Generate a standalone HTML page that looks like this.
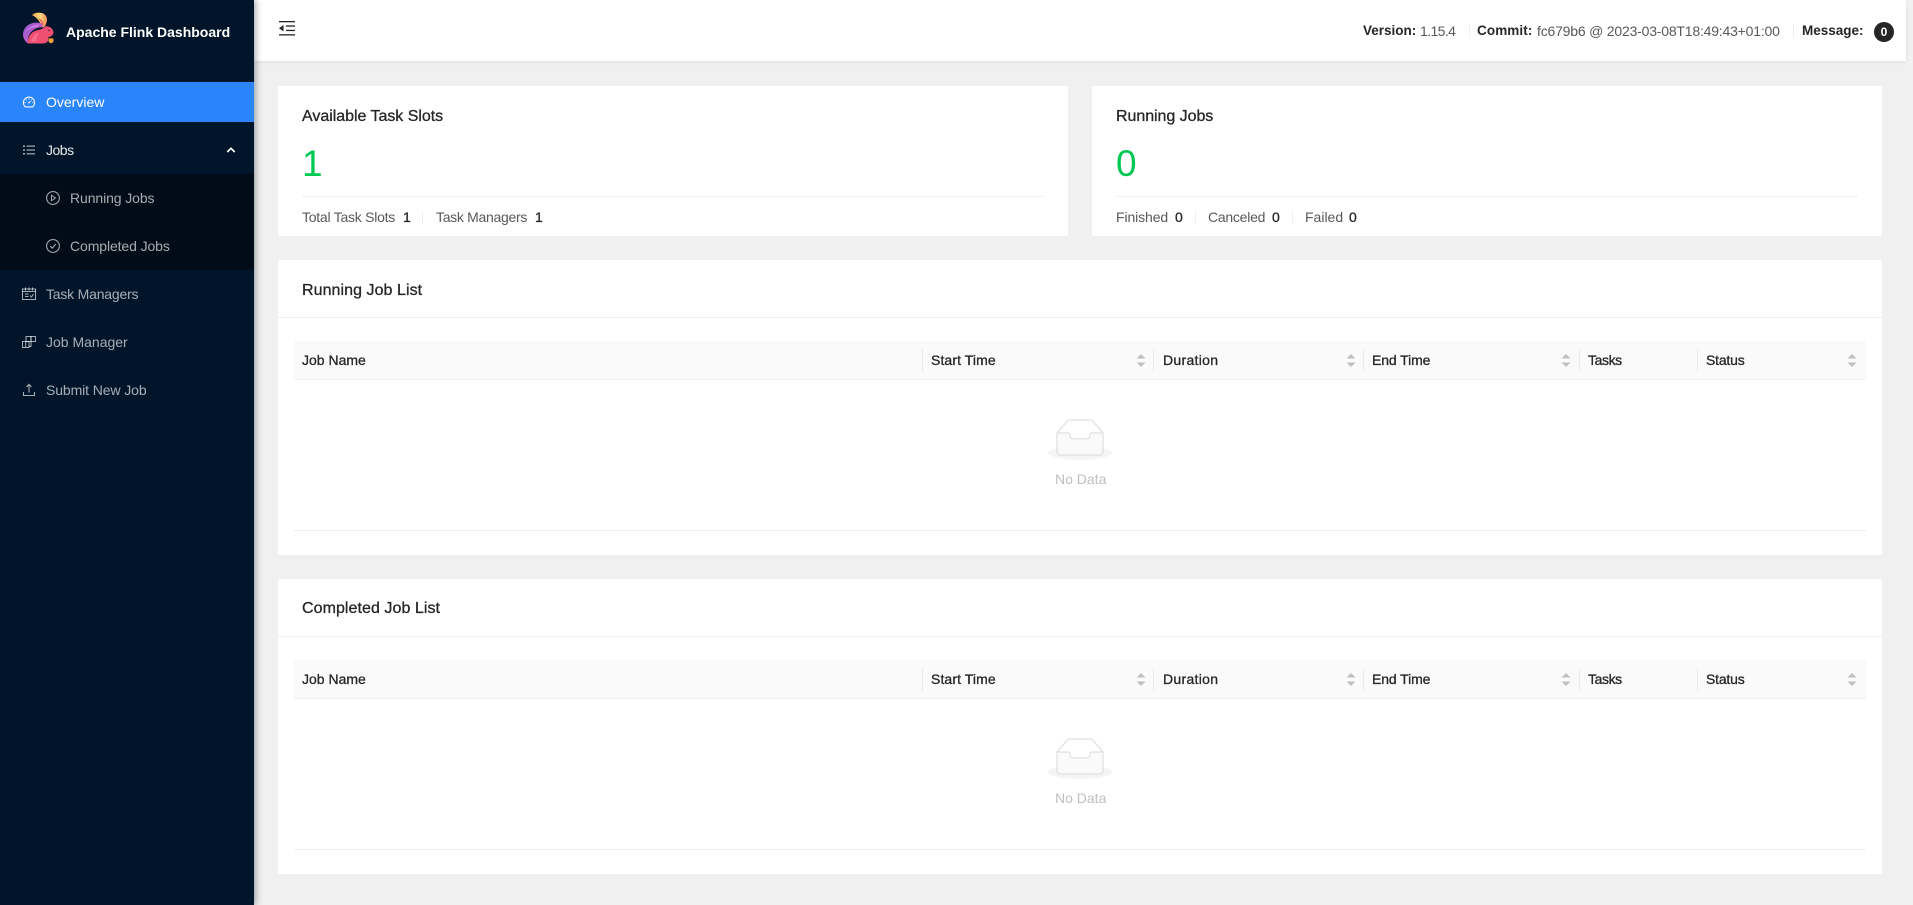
<!DOCTYPE html>
<html><head><meta charset="utf-8"><title>Apache Flink Dashboard</title>
<style>
*{box-sizing:border-box;margin:0;padding:0}
html,body{width:1913px;height:905px;overflow:hidden;background:#f0f0f0;font-family:"Liberation Sans",sans-serif;font-size:14px;color:#262626}
.a{position:absolute}
.t{position:absolute;white-space:nowrap;line-height:20px;height:20px}
.m{-webkit-text-stroke:.3px currentColor}
#side{left:0;top:0;width:254px;height:905px;background:#001529;box-shadow:2px 0 6px rgba(0,21,41,.35);z-index:3}
#side .t{color:rgba(255,255,255,.65)}
#side svg{position:absolute;overflow:visible}
#head{left:254px;top:0;width:1652px;height:61px;background:#fff;box-shadow:0 1px 4px rgba(0,21,41,.08);z-index:2}
.card{position:absolute;background:#fff;border-radius:2px}
.dv{position:absolute;background:#f0f0f0}
.c6{color:#595959}
.thead{position:absolute;left:16px;top:81px;width:1572px;height:39px;background:#fafafa;border-bottom:1px solid #f0f0f0}
.vd{position:absolute;top:8px;width:1px;height:23px;background:#ebebeb}
.thead svg{position:absolute;top:13px}
.thead .t{top:9px}
</style></head>
<body>
<div class="a" id="side">
  <svg style="left:0;top:0" width="70" height="60" viewBox="0 0 70 60">
    <defs>
      <linearGradient id="g1" x1="0" y1="0" x2="1" y2="1"><stop offset="0" stop-color="#8f5bd6"/><stop offset=".5" stop-color="#b75cc8"/><stop offset="1" stop-color="#ee4f86"/></linearGradient>
      <linearGradient id="g2" x1="0" y1="0" x2="1" y2="0"><stop offset="0" stop-color="#f2a64e"/><stop offset=".55" stop-color="#f8d97c"/><stop offset="1" stop-color="#ef8f5a"/></linearGradient>
    </defs>
    <path d="M32 15C35 12 41 12 44 14C47 16 48 20 46 24C45 27 43 28 41 27C41 23 38 18 32 15Z" fill="url(#g2)"/>
    <path d="M38 18C40 20 41 23 41 26L44 26C44 22 42 19 38 18Z" fill="#f07a5a"/>
    <path d="M42 23.500C34 21 26 24 23.500 31C22 36 24 41 28 43.500C27 37 30 31 36 28.500C38 27.500 41 27 43 27.500Z" fill="url(#g1)"/>
    <path d="M39 24.500C33 24.500 28 27.500 26 32C29 29 33 27 38 27Z" fill="#c77be0"/>
    <path d="M28 43.500C27 38 31 31 38 30C41 29.500 43 28.500 45 26.500C49 25.500 53 28.500 53.500 32C53.500 35 51 37 48.500 37L48 41C47 42.500 45 43.500 43 43.500Z" fill="#ee4f72"/>
    <path d="M31 41.500C32 37 35 34 39 33C37 36 36 39 36 41.500Z" fill="#f76d8e"/>
    <circle cx="51" cy="40.500" r="2.600" fill="#eea23c"/>
    <path d="M48.500 38.500H53.500" stroke="#a85a20" stroke-width="1"/>
    <circle cx="49" cy="30.500" r=".7" fill="#4a1030"/>
  </svg>
  <div class="t" style="left:66px;top:22px;color:#fff;font-weight:700;font-size:14px">Apache Flink Dashboard</div>

  <div class="a" style="left:0;top:82px;width:254px;height:40px;background:#2a85fa"></div>
  <svg style="left:22px;top:95px" width="14" height="14" viewBox="0 0 1024 1024" fill="#fff"><path d="M924.8 385.6a446.7 446.7 0 0 0-96-142.4 446.7 446.7 0 0 0-142.4-96C631.1 123.8 572.5 112 512 112s-119.1 11.8-174.4 35.2a446.7 446.7 0 0 0-142.4 96 446.7 446.7 0 0 0-96 142.4C75.8 440.9 64 499.500 64 560c0 132.7 58.3 257.7 159.9 343.1l1.7 1.4c5.8 4.8 13.1 7.500 20.6 7.500h531.7c7.500 0 14.8-2.7 20.6-7.500l1.7-1.4C901.7 817.7 960 692.7 960 560c0-60.500-11.8-119.1-35.2-174.4zM761.4 836H262.6A371.12 371.12 0 0 1 140 560c0-99.4 38.7-192.8 109-263 70.3-70.3 163.7-109 263-109 99.4 0 192.8 38.7 263 109 70.3 70.3 109 163.7 109 263 0 105.6-44.500 205.500-122.6 276zM623.500 421.500a8.03 8.03 0 0 0-11.3 0L527.7 506c-18.7-5-39.4-.2-54.1 14.500a55.95 55.95 0 0 0 0 79.2 55.95 55.95 0 0 0 79.2 0 55.87 55.87 0 0 0 14.500-54.1l84.500-84.500c3.1-3.1 3.1-8.2 0-11.3l-28.3-28.3zM490 320h44c4.4 0 8-3.6 8-8v-80c0-4.4-3.6-8-8-8h-44c-4.4 0-8 3.6-8 8v80c0 4.4 3.6 8 8 8zm260 218v44c0 4.4 3.6 8 8 8h80c4.4 0 8-3.6 8-8v-44c0-4.4-3.6-8-8-8h-80c-4.4 0-8 3.6-8 8zm12.7-197.2l-31.1-31.1a8.03 8.03 0 0 0-11.3 0l-56.6 56.6a8.03 8.03 0 0 0 0 11.3l31.1 31.1c3.1 3.1 8.2 3.1 11.3 0l56.6-56.6c3.1-3.1 3.1-8.2 0-11.3zm-458.6-31.1a8.03 8.03 0 0 0-11.3 0l-31.1 31.1a8.03 8.03 0 0 0 0 11.3l56.6 56.6c3.1 3.1 8.2 3.1 11.3 0l31.1-31.1c3.1-3.1 3.1-8.2 0-11.3l-56.6-56.6zM262 530h-80c-4.4 0-8 3.6-8 8v44c0 4.4 3.6 8 8 8h80c4.4 0 8-3.6 8-8v-44c0-4.4-3.6-8-8-8z"/></svg>
  <div class="t" style="left:46px;top:92px;color:#fff">Overview</div>

  <svg style="left:22px;top:143px" width="14" height="14" viewBox="0 0 14 14" fill="rgba(255,255,255,.65)"><rect x="1" y="2.500" width="2" height="1.500"/><rect x="1" y="6.300" width="2" height="1.500"/><rect x="1" y="10" width="2" height="1.500"/><rect x="4.500" y="2.500" width="8.500" height="1.200"/><rect x="4.500" y="6.400" width="8.500" height="1.200"/><rect x="4.500" y="10.200" width="8.500" height="1.200"/></svg>
  <div class="t" style="left:46px;top:140px;color:rgba(255,255,255,.9);letter-spacing:-.5px">Jobs</div>
  <svg style="left:226px;top:146px" width="10" height="8" viewBox="0 0 10 8" fill="none" stroke="#fff" stroke-width="1.700"><path d="M1.300 6L5 2.300L8.700 6"/></svg>

  <div class="a" style="left:0;top:174px;width:254px;height:96px;background:#000c17"></div>
  <svg style="left:46px;top:191px" width="14" height="14" viewBox="0 0 14 14" fill="none" stroke="rgba(255,255,255,.65)"><circle cx="7" cy="7" r="6.400" stroke-width="1.100"/><path d="M5.500 4.300L9.500 7L5.500 9.700Z" stroke-width="1"/></svg>
  <div class="t" style="left:70px;top:188px;letter-spacing:-.1px">Running Jobs</div>
  <svg style="left:46px;top:239px" width="14" height="14" viewBox="0 0 14 14" fill="none" stroke="rgba(255,255,255,.65)"><circle cx="7" cy="7" r="6.400" stroke-width="1.100"/><path d="M4.300 7.200L6.300 9.200L9.800 5" stroke-width="1.100"/></svg>
  <div class="t" style="left:70px;top:236px;letter-spacing:-.1px">Completed Jobs</div>

  <svg style="left:22px;top:287px" width="14" height="14" viewBox="0 0 14 14" fill="none" stroke="rgba(255,255,255,.65)" stroke-width="1"><rect x=".5" y="2" width="13" height="10.500"/><path d="M3.500 .5V3.500M7 .5V3.500M10.500 .5V3.500M.5 4.500H13.500M3 7H6.500M3 9.500H6.500M8 8.500L9.500 10L11.500 7"/></svg>
  <div class="t" style="left:46px;top:284px;letter-spacing:-.2px">Task Managers</div>

  <svg style="left:22px;top:335px" width="14" height="14" viewBox="0 0 14 14" fill="none" stroke="rgba(255,255,255,.65)" stroke-width="1"><rect x=".5" y="6.500" width="6.500" height="6"/><path d="M3.700 6.500V12.500"/><rect x="4" y="1.500" width="5" height="5"/><rect x="9" y="1.500" width="4.500" height="5"/><path d="M7 11.500H9V6.500"/></svg>
  <div class="t" style="left:46px;top:332px">Job Manager</div>

  <svg style="left:22px;top:383px" width="14" height="14" viewBox="0 0 14 14" fill="none" stroke="rgba(255,255,255,.65)" stroke-width="1.100"><path d="M7 9.500V1.500M4.500 4L7 1.300L9.500 4M1.500 9V12.500H12.500V9"/></svg>
  <div class="t" style="left:46px;top:380px;letter-spacing:-.1px">Submit New Job</div>
</div>

<div class="a" style="left:1906px;top:0;width:7px;height:905px;background:#f1f1f1"></div>

<div class="a" id="head">
  <svg class="a" style="left:25px;top:21px" width="16" height="15" viewBox="0 0 16 15" fill="#262626"><rect y="0" width="16" height="1.300"/><rect y="13.200" width="16" height="1.300"/><rect x="7" y="4.400" width="9" height="1.300"/><rect x="7" y="8.800" width="9" height="1.300"/><path d="M0 7.200L4.500 4V10.500Z"/></svg>
  <div class="t" style="left:1109px;top:21px;font-weight:700;font-size:13.500px">Version:</div>
  <div class="t c6" style="left:1166px;top:21px;letter-spacing:-.6px">1.15.4</div>
  <div class="dv" style="left:1215px;top:24px;width:1px;height:14px"></div>
  <div class="t" style="left:1223px;top:21px;font-weight:700;font-size:13.500px;letter-spacing:.1px">Commit:</div>
  <div class="t c6" style="left:1283px;top:21px;letter-spacing:-.2px">fc679b6 @ 2023-03-08T18:49:43+01:00</div>
  <div class="dv" style="left:1539px;top:24px;width:1px;height:14px"></div>
  <div class="t" style="left:1548px;top:21px;font-weight:700;font-size:13.500px">Message:</div>
  <div class="a" style="left:1620px;top:22px;width:20px;height:20px;border-radius:50%;background:#262626;color:#fff;font-size:12px;line-height:20px;text-align:center;font-weight:700">0</div>
</div>

<div class="card" style="left:278px;top:86px;width:790px;height:150px">
  <div class="t m" style="left:24px;top:19px;font-size:16px;transform:translateY(2px);letter-spacing:-.03px">Available Task Slots</div>
  <div class="t" style="left:24px;top:58px;font-size:37px;line-height:40px;height:40px;color:#00c853">1</div>
  <div class="dv" style="left:24px;top:110px;width:742px;height:1px"></div>
  <div class="t c6" style="left:24px;top:121px;letter-spacing:-.25px">Total Task Slots</div>
  <div class="t m" style="left:125px;top:121px">1</div>
  <div class="dv" style="left:144px;top:125px;width:1px;height:13px"></div>
  <div class="t c6" style="left:158px;top:121px;letter-spacing:-.3px">Task Managers</div>
  <div class="t m" style="left:257px;top:121px">1</div>
</div>

<div class="card" style="left:1092px;top:86px;width:790px;height:150px">
  <div class="t m" style="left:24px;top:21px;font-size:16px;letter-spacing:-.05px">Running Jobs</div>
  <div class="t" style="left:24px;top:58px;font-size:37px;line-height:40px;height:40px;color:#00c853">0</div>
  <div class="dv" style="left:24px;top:110px;width:742px;height:1px"></div>
  <div class="t c6" style="left:24px;top:121px;letter-spacing:-.1px">Finished</div>
  <div class="t m" style="left:83px;top:121px">0</div>
  <div class="dv" style="left:103px;top:125px;width:1px;height:13px"></div>
  <div class="t c6" style="left:116px;top:121px;letter-spacing:-.25px">Canceled</div>
  <div class="t m" style="left:180px;top:121px">0</div>
  <div class="dv" style="left:200px;top:125px;width:1px;height:13px"></div>
  <div class="t c6" style="left:213px;top:121px">Failed</div>
  <div class="t m" style="left:257px;top:121px">0</div>
</div>

<div class="card" style="left:278px;top:260px;width:1604px;height:295px">
  <div class="t m" style="left:24px;top:21px;font-size:16px;letter-spacing:.06px">Running Job List</div>
  <div class="dv" style="left:0;top:57px;width:1604px;height:1px"></div>
  <div class="thead">
    <div class="t m" style="left:8px">Job Name</div>
    <div class="vd" style="left:628px"></div>
    <div class="t m" style="left:637px;letter-spacing:.1px">Start Time</div>
    <svg style="left:842px" width="10" height="14" viewBox="0 0 10 14" fill="#bfbfbf"><path d="M5 0L9.500 4.500H.5Z"/><path d="M5 13L9.500 8.500H.5Z"/></svg>
    <div class="vd" style="left:859px"></div>
    <div class="t m" style="left:869px;letter-spacing:.3px">Duration</div>
    <svg style="left:1052px" width="10" height="14" viewBox="0 0 10 14" fill="#bfbfbf"><path d="M5 0L9.500 4.500H.5Z"/><path d="M5 13L9.500 8.500H.5Z"/></svg>
    <div class="vd" style="left:1069px"></div>
    <div class="t m" style="left:1078px;letter-spacing:-.1px">End Time</div>
    <svg style="left:1267px" width="10" height="14" viewBox="0 0 10 14" fill="#bfbfbf"><path d="M5 0L9.500 4.500H.5Z"/><path d="M5 13L9.500 8.500H.5Z"/></svg>
    <div class="vd" style="left:1285px"></div>
    <div class="t m" style="left:1294px;letter-spacing:-.4px">Tasks</div>
    <div class="vd" style="left:1403px"></div>
    <div class="t m" style="left:1412px;letter-spacing:-.2px">Status</div>
    <svg style="left:1553px" width="10" height="14" viewBox="0 0 10 14" fill="#bfbfbf"><path d="M5 0L9.500 4.500H.5Z"/><path d="M5 13L9.500 8.500H.5Z"/></svg>
  </div>
  <svg class="a" style="left:770px;top:159px" width="64" height="41" viewBox="0 0 64 41"><g transform="translate(0 1)" fill="none" fill-rule="evenodd"><ellipse fill="#f5f5f5" cx="32" cy="33" rx="32" ry="7"/><g fill-rule="nonzero" stroke="#d9d9d9"><path d="M55 12.760L44.854 1.258C44.367.474 43.656 0 42.907 0H21.093c-.749 0-1.460.474-1.947 1.257L9 12.761V22h46v-9.240z"/><path d="M41.613 15.931c0-1.605.994-2.930 2.227-2.931H55v18.137C55 33.260 53.680 35 52.050 35h-40.100C10.320 35 9 33.259 9 31.137V13h11.160c1.233 0 2.227 1.323 2.227 2.928v.022c0 1.605 1.005 2.901 2.237 2.901h14.752c1.232 0 2.237-1.308 2.237-2.913v-.007z" fill="#fafafa"/></g></g></svg>
  <div class="t" style="left:777px;top:209px;color:#bfbfbf">No Data</div>
  <div class="dv" style="left:16px;top:270px;width:1572px;height:1px"></div>
</div>

<div class="card" style="left:278px;top:579px;width:1604px;height:295px">
  <div class="t m" style="left:24px;top:20px;font-size:16px;letter-spacing:.06px">Completed Job List</div>
  <div class="dv" style="left:0;top:57px;width:1604px;height:1px"></div>
  <div class="thead">
    <div class="t m" style="left:8px">Job Name</div>
    <div class="vd" style="left:628px"></div>
    <div class="t m" style="left:637px;letter-spacing:.1px">Start Time</div>
    <svg style="left:842px" width="10" height="14" viewBox="0 0 10 14" fill="#bfbfbf"><path d="M5 0L9.500 4.500H.5Z"/><path d="M5 13L9.500 8.500H.5Z"/></svg>
    <div class="vd" style="left:859px"></div>
    <div class="t m" style="left:869px;letter-spacing:.3px">Duration</div>
    <svg style="left:1052px" width="10" height="14" viewBox="0 0 10 14" fill="#bfbfbf"><path d="M5 0L9.500 4.500H.5Z"/><path d="M5 13L9.500 8.500H.5Z"/></svg>
    <div class="vd" style="left:1069px"></div>
    <div class="t m" style="left:1078px;letter-spacing:-.1px">End Time</div>
    <svg style="left:1267px" width="10" height="14" viewBox="0 0 10 14" fill="#bfbfbf"><path d="M5 0L9.500 4.500H.5Z"/><path d="M5 13L9.500 8.500H.5Z"/></svg>
    <div class="vd" style="left:1285px"></div>
    <div class="t m" style="left:1294px;letter-spacing:-.4px">Tasks</div>
    <div class="vd" style="left:1403px"></div>
    <div class="t m" style="left:1412px;letter-spacing:-.2px">Status</div>
    <svg style="left:1553px" width="10" height="14" viewBox="0 0 10 14" fill="#bfbfbf"><path d="M5 0L9.500 4.500H.5Z"/><path d="M5 13L9.500 8.500H.5Z"/></svg>
  </div>
  <svg class="a" style="left:770px;top:159px" width="64" height="41" viewBox="0 0 64 41"><g transform="translate(0 1)" fill="none" fill-rule="evenodd"><ellipse fill="#f5f5f5" cx="32" cy="33" rx="32" ry="7"/><g fill-rule="nonzero" stroke="#d9d9d9"><path d="M55 12.760L44.854 1.258C44.367.474 43.656 0 42.907 0H21.093c-.749 0-1.460.474-1.947 1.257L9 12.761V22h46v-9.240z"/><path d="M41.613 15.931c0-1.605.994-2.930 2.227-2.931H55v18.137C55 33.260 53.680 35 52.050 35h-40.100C10.320 35 9 33.259 9 31.137V13h11.160c1.233 0 2.227 1.323 2.227 2.928v.022c0 1.605 1.005 2.901 2.237 2.901h14.752c1.232 0 2.237-1.308 2.237-2.913v-.007z" fill="#fafafa"/></g></g></svg>
  <div class="t" style="left:777px;top:209px;color:#bfbfbf">No Data</div>
  <div class="dv" style="left:16px;top:270px;width:1572px;height:1px"></div>
</div>
</body></html>
